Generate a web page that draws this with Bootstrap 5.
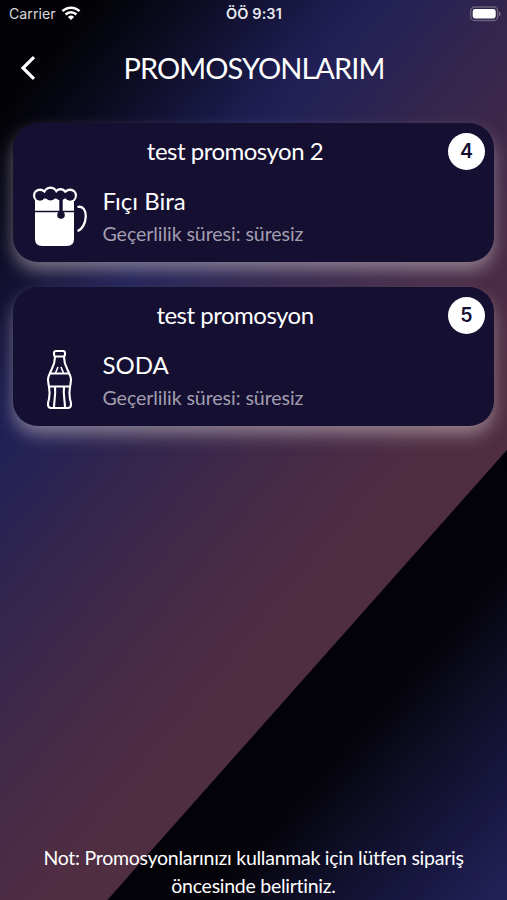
<!DOCTYPE html>
<html lang="tr">
<head>
<meta charset="utf-8">
<meta name="viewport" content="width=device-width, initial-scale=1">
<title>Promosyonlarım</title>
<link href="https://cdn.jsdelivr.net/npm/bootstrap@5.3.0/dist/css/bootstrap.min.css" rel="stylesheet">
<style>
body{font-family:Lato,"Open Sans",sans-serif;color:#fff;background:#05040a}
.screen{height:900px;overflow:hidden;background:
 linear-gradient(131.6deg,transparent 69.35%,#030208 69.45%,#040309 77%,#0d0d23 83%,#17163d 91%,#232057 99%),
 linear-gradient(130deg,#030307 8%,#0b0b20 15%,#151439 21.5%,#201f56 28.5%,#262254 33%,#33264d 41%,#41294a 50%,#4a2b46 57%,#502e42 64%)}
.status{height:28px;font:15px/27px Inter,sans-serif;padding:0 6px 1px 9px}
.status>*{flex:1}
.carrier{font-size:14.2px;color:#d9d9dd}
.clock{font-weight:600;font-size:14.5px;letter-spacing:.1px;color:#e9e9f0;padding-right:2px}
.title-bar{height:81px;padding:0 20px 1px}
.title-bar h1{font-size:29px;line-height:40px;letter-spacing:-.95px;font-weight:400}
.promo-list{padding:14px 13px 0;gap:25px}
.promo{height:139px;border-radius:25px;background:#150f31;box-shadow:0 9px 17px -1px rgba(222,212,212,.5)}
.promo-head{height:57px;padding:0 9px}
.promo-head h2{font-size:24px;font-weight:400;letter-spacing:-.5px}
.count{width:37px;height:37px;font:600 19.5px/37px Inter,sans-serif;color:#150f31}
.promo-icon{width:89.5px;padding:5px 0 0 19px}
.promo-info{padding-top:6px}
.item{font-size:24px;line-height:30px}
.valid{font-size:19.6px;line-height:24px;letter-spacing:-.08px;color:#a29eb0;margin-top:6px}
.note{font-size:19.5px;line-height:28px;letter-spacing:-.26px}
</style>
<script src="https://cdn.jsdelivr.net/npm/bootstrap@5.3.0/dist/js/bootstrap.bundle.min.js"></script>
</head>
<body>
<div class="screen d-flex flex-column">
  <div class="status d-flex align-items-center">
    <div class="carrier d-flex align-items-center">Carrier
      <svg style="margin-left:5px" width="20" height="15" viewBox="0 0 20 15" fill="none" stroke="#fff" stroke-width="2.5"><path d="M1.500 5.200a12 12 0 0 1 17 0M4.600 8.500a7.700 7.700 0 0 1 10.800 0"/><path d="M10 14 6.900 10.900a4.500 4.500 0 0 1 6.200 0z" fill="#fff" stroke="none"/></svg>
    </div>
    <div class="clock text-center">ÖÖ 9:31</div>
    <div class="d-flex justify-content-end">
      <svg width="31" height="16" viewBox="0 0 31 16"><rect x=".7" y="1" width="27" height="13.5" rx="4" fill="none" stroke="#6b6279" stroke-width="1.3"/><rect x="2.700" y="3" width="23" height="9.500" rx="2.400" fill="#fff"/><path d="M29 5.500c2 .8 2 3.800 0 4.600z" fill="#7b7287"/></svg>
    </div>
  </div>
  <div class="title-bar d-flex align-items-center">
    <svg width="17" height="26" viewBox="0 0 17 26" fill="none" stroke="#fff" stroke-width="3.2"><path d="M14 2.200 3 13l11 10.800"/></svg>
    <h1 class="m-0 flex-grow-1 text-center pe-3">PROMOSYONLARIM</h1>
  </div>
  <main class="promo-list d-flex flex-column flex-grow-1">
    <section class="promo">
      <div class="promo-head d-flex align-items-center">
        <h2 class="m-0 flex-grow-1 text-center">test promosyon 2</h2><span class="count rounded-circle bg-white text-center">4</span>
      </div>
      <div class="d-flex">
        <div class="promo-icon">
          <svg width="56" height="62" viewBox="0 0 56 62"><path d="M3 12h39v42q0 7-7 7H10q-7 0-7-7z" fill="#fff"/><g fill="#fff"><circle cx="8" cy="10.500" r="7"/><circle cx="18.500" cy="9" r="7.600"/><circle cx="28.500" cy="10" r="7"/><circle cx="38" cy="10.500" r="7"/></g><g fill="#150f31"><circle cx="8" cy="10.800" r="4.900"/><circle cx="18.500" cy="9.600" r="5.800"/><circle cx="28.500" cy="10.500" r="5"/><circle cx="38" cy="10.800" r="4.900"/><path d="M8 8h30v5.500H8zM27.300 12h3.400v17h-3.400z"/><circle cx="29" cy="30" r="3.800"/></g><path d="M2 26.500h42" stroke="#150f31" stroke-width="1.700"/><path d="M45.500 22c12-3 10 21 0 24" fill="none" stroke="#fff" stroke-width="2.300"/></svg>
        </div>
        <div class="promo-info"><div class="item">Fıçı Bira</div><div class="valid">Geçerlilik süresi: süresiz</div></div>
      </div>
    </section>
    <section class="promo">
      <div class="promo-head d-flex align-items-center">
        <h2 class="m-0 flex-grow-1 text-center">test promosyon</h2><span class="count rounded-circle bg-white text-center">5</span>
      </div>
      <div class="d-flex">
        <div class="promo-icon">
          <svg width="56" height="62" viewBox="0 0 56 62" fill="none" stroke="#fff" stroke-width="2.1" stroke-linejoin="round"><rect x="22" y="2" width="11" height="5.500" rx="2"/><path d="M23 8c0 8-3 11-5 16-3 6-2 8-1 14 1 5 1 7 0 12-2 6-1 9 2 9h17c3 0 4-3 2-9-1-5-1-7 0-12 1-6 2-8-1-14-2-5-5-8-5-16M17 24.500h21M17 37.500h21M23 38c1 8-1 13-1 21M32 38c-1 8 1 13 1 21"/><path d="m23.500 24 2.500-6m5.500 6-2.500-6" stroke-width="1.600"/></svg>
        </div>
        <div class="promo-info"><div class="item">SODA</div><div class="valid">Geçerlilik süresi: süresiz</div></div>
      </div>
    </section>
  </main>
  <footer class="note text-center">Not: Promosyonlarınızı kullanmak için lütfen sipariş<br>öncesinde belirtiniz.</footer>
</div>
</body>
</html>
